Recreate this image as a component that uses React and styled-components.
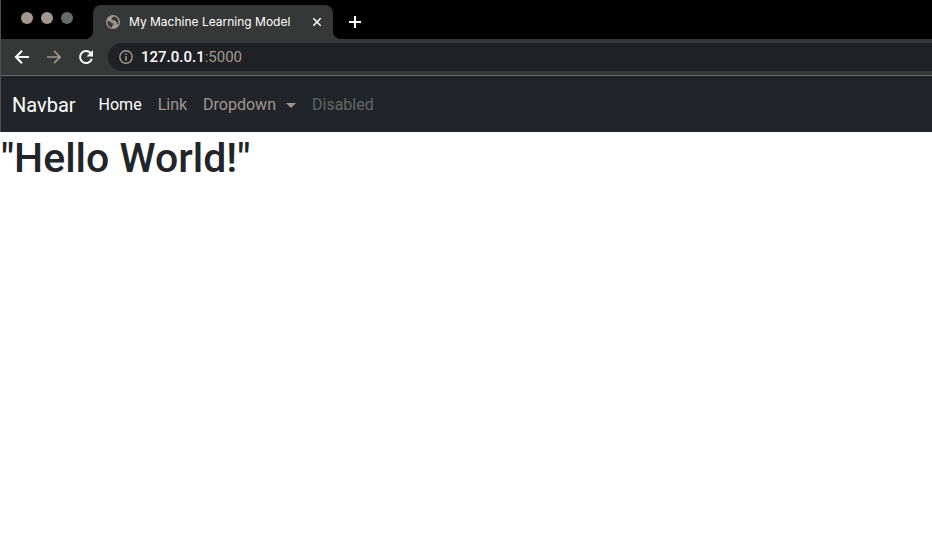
import React from "react";
import styled, { createGlobalStyle } from "styled-components";

const GlobalStyle = createGlobalStyle`
  *, *::before, *::after { box-sizing: border-box; }
  body {
    margin: 0;
    background: #fff;
    color: #212529;
    font-family: Inter, "Liberation Sans", sans-serif;
  }
`;

const BrowserFrame = styled.div`
  border-left: 1px solid #4c504e;
  background: #000;
`;

const TabStrip = styled.div`
  display: flex;
  align-items: flex-end;
  height: 39px;
  padding-left: 20px;
`;

const WindowControls = styled.div`
  display: flex;
  gap: 8px;
  align-self: flex-start;
  padding-top: 12px;
  margin-right: 20px;
`;

const WindowButton = styled.button`
  width: 12px;
  height: 12px;
  padding: 0;
  border: 0;
  border-radius: 50%;
  background: ${(p) => p.$color};
`;

const Tab = styled.div`
  position: relative;
  display: flex;
  align-items: center;
  width: 240px;
  height: 34px;
  padding: 0 11px 0 13px;
  border-radius: 8px 8px 0 0;
  background: #363837;
  color: #fff;

  &::before,
  &::after {
    content: "";
    position: absolute;
    bottom: 0;
    width: 8px;
    height: 8px;
  }
  &::before {
    right: 100%;
    background: radial-gradient(circle at 0 0, transparent 8px, #363837 8px);
  }
  &::after {
    left: 100%;
    background: radial-gradient(circle at 100% 0, transparent 8px, #363837 8px);
  }
`;

const TabTitle = styled.span`
  flex: 1;
  margin-left: 9px;
  font-size: 12px;
  font-weight: 400;
  line-height: 16px;
  white-space: nowrap;
`;

const IconButton = styled.button`
  display: flex;
  align-items: center;
  justify-content: center;
  flex: none;
  width: ${(p) => p.$size}px;
  height: ${(p) => p.$size}px;
  padding: 0;
  border: 0;
  background: none;
  color: ${(p) => p.$color || "#fff"};
`;

const NewTab = styled.div`
  display: flex;
  align-items: center;
  height: 34px;
  padding-left: 14px;
`;

const Toolbar = styled.div`
  display: flex;
  align-items: center;
  height: 37px;
  padding-left: 13px;
  border-bottom: 1px solid #686d6a;
  background: #363837;
`;

const ToolbarButtons = styled.div`
  display: flex;
  gap: 16px;
  margin-right: 14px;
`;

const AddressBar = styled.div`
  display: flex;
  align-items: center;
  gap: 8px;
  flex: 1;
  height: 28px;
  padding-left: 11px;
  border-radius: 14px 0 0 14px;
  background: #202124;
  color: #a39a94;
`;

const Address = styled.div`
  font-family: Roboto, "Liberation Sans", sans-serif;
  font-size: 15px;
  line-height: 20px;
`;

const Host = styled.span`
  color: #fff;
  font-weight: 500;
`;

const Navbar = styled.nav`
  display: flex;
  align-items: center;
  height: 56px;
  padding: 2px 0 0 11px;
  background: #212529;
  font-family: Roboto, "Liberation Sans", sans-serif;
`;

const Brand = styled.a`
  margin-right: 23px;
  color: #fff;
  font-size: 20px;
  line-height: 30px;
  text-decoration: none;
`;

const NavList = styled.ul`
  display: flex;
  gap: 16px;
  margin: 0;
  padding: 0;
  list-style: none;
`;

const NavLink = styled.a`
  display: flex;
  align-items: center;
  gap: 10px;
  color: ${(p) => p.$color};
  font-size: 16px;
  line-height: 24px;
  text-decoration: none;
`;

const Caret = styled.span`
  border-top: 5px solid currentColor;
  border-right: 5px solid transparent;
  border-left: 5px solid transparent;
`;

const Heading = styled.h1`
  margin: 0;
  padding: 2px 0 0 1px;
  font-family: Roboto, "Liberation Sans", sans-serif;
  font-size: 41px;
  font-weight: 500;
  line-height: 48px;
`;

const links = [
  { label: "Home", color: "#fff" },
  { label: "Link", color: "#a0968f" },
  { label: "Dropdown", color: "#a0968f", caret: true },
  { label: "Disabled", color: "#636765", disabled: true },
];

const stroke = { fill: "none", stroke: "currentColor", strokeWidth: 2 };

function Globe() {
  return (
    <svg width="14" height="14" viewBox="0 0 14 14" aria-hidden="true">
      <circle cx="7" cy="7" r="7" fill="#a0968f" />
      <path
        d="M1.400 6 4 6.200 5.500 8 7.500 8.500v1.300L6 11v1.500C3.500 12.200 1.200 10 1.400 6Z M8 1.400 5.800 3v1.500L7 5.500l1.500-.5 1 1.500 1.300.5v1.500l1.200 1C13.300 6.500 12.300 2.600 8 1.400Z"
        fill="#363837"
      />
    </svg>
  );
}

export default function App() {
  return (
    <>
      <GlobalStyle />
      <BrowserFrame>
        <TabStrip>
          <WindowControls>
            <WindowButton $color="#a59790" aria-label="Close window" />
            <WindowButton $color="#a59790" aria-label="Minimize window" />
            <WindowButton $color="#636e69" aria-label="Zoom window" />
          </WindowControls>
          <Tab>
            <Globe />
            <TabTitle>My Machine Learning Model</TabTitle>
            <IconButton $size={10} aria-label="Close tab">
              <svg width="10" height="10" viewBox="0 0 10 10">
                <path d="M1.300 1.300l7.400 7.400M8.700 1.300l-7.400 7.400" {...stroke} strokeWidth="1.500" />
              </svg>
            </IconButton>
          </Tab>
          <NewTab>
            <IconButton $size={16} aria-label="New tab">
              <svg width="16" height="16" viewBox="0 0 16 16">
                <path d="M8 2v12M2 8h12" {...stroke} />
              </svg>
            </IconButton>
          </NewTab>
        </TabStrip>
        <Toolbar>
          <ToolbarButtons>
            <IconButton $size={16} aria-label="Back">
              <svg width="16" height="16" viewBox="0 0 16 16">
                <path d="M15 8H2.500M8 1.800 1.900 8 8 14.200" {...stroke} />
              </svg>
            </IconButton>
            <IconButton $size={16} $color="#a0968f" aria-label="Forward">
              <svg width="16" height="16" viewBox="0 0 16 16">
                <path d="M1 8h12.500M8 1.800 14.100 8 8 14.200" {...stroke} strokeWidth="1.700" />
              </svg>
            </IconButton>
            <IconButton $size={16} aria-label="Reload">
              <svg width="16" height="16" viewBox="0 0 16 16">
                <path d="M13.800 9.800A6 6 0 1 1 12.500 4" {...stroke} />
                <path d="M15 1v6.500H8.500Z" fill="currentColor" />
              </svg>
            </IconButton>
          </ToolbarButtons>
          <AddressBar>
            <svg width="14" height="14" viewBox="0 0 14 14" aria-hidden="true">
              <circle cx="7" cy="7" r="6.200" {...stroke} strokeWidth="1.400" />
              <path d="M7 6.200v4.300M7 3.500v1.600" {...stroke} strokeWidth="1.600" />
            </svg>
            <Address>
              <Host>127.0.0.1</Host>:5000
            </Address>
          </AddressBar>
        </Toolbar>
        <Navbar>
          <Brand href="#">Navbar</Brand>
          <NavList>
            {links.map((link) => (
              <li key={link.label}>
                <NavLink
                  href={link.disabled ? undefined : "#"}
                  aria-disabled={link.disabled}
                  $color={link.color}
                >
                  {link.label}
                  {link.caret && <Caret />}
                </NavLink>
              </li>
            ))}
          </NavList>
        </Navbar>
      </BrowserFrame>
      <main>
        <Heading>"Hello World!"</Heading>
      </main>
    </>
  );
}
